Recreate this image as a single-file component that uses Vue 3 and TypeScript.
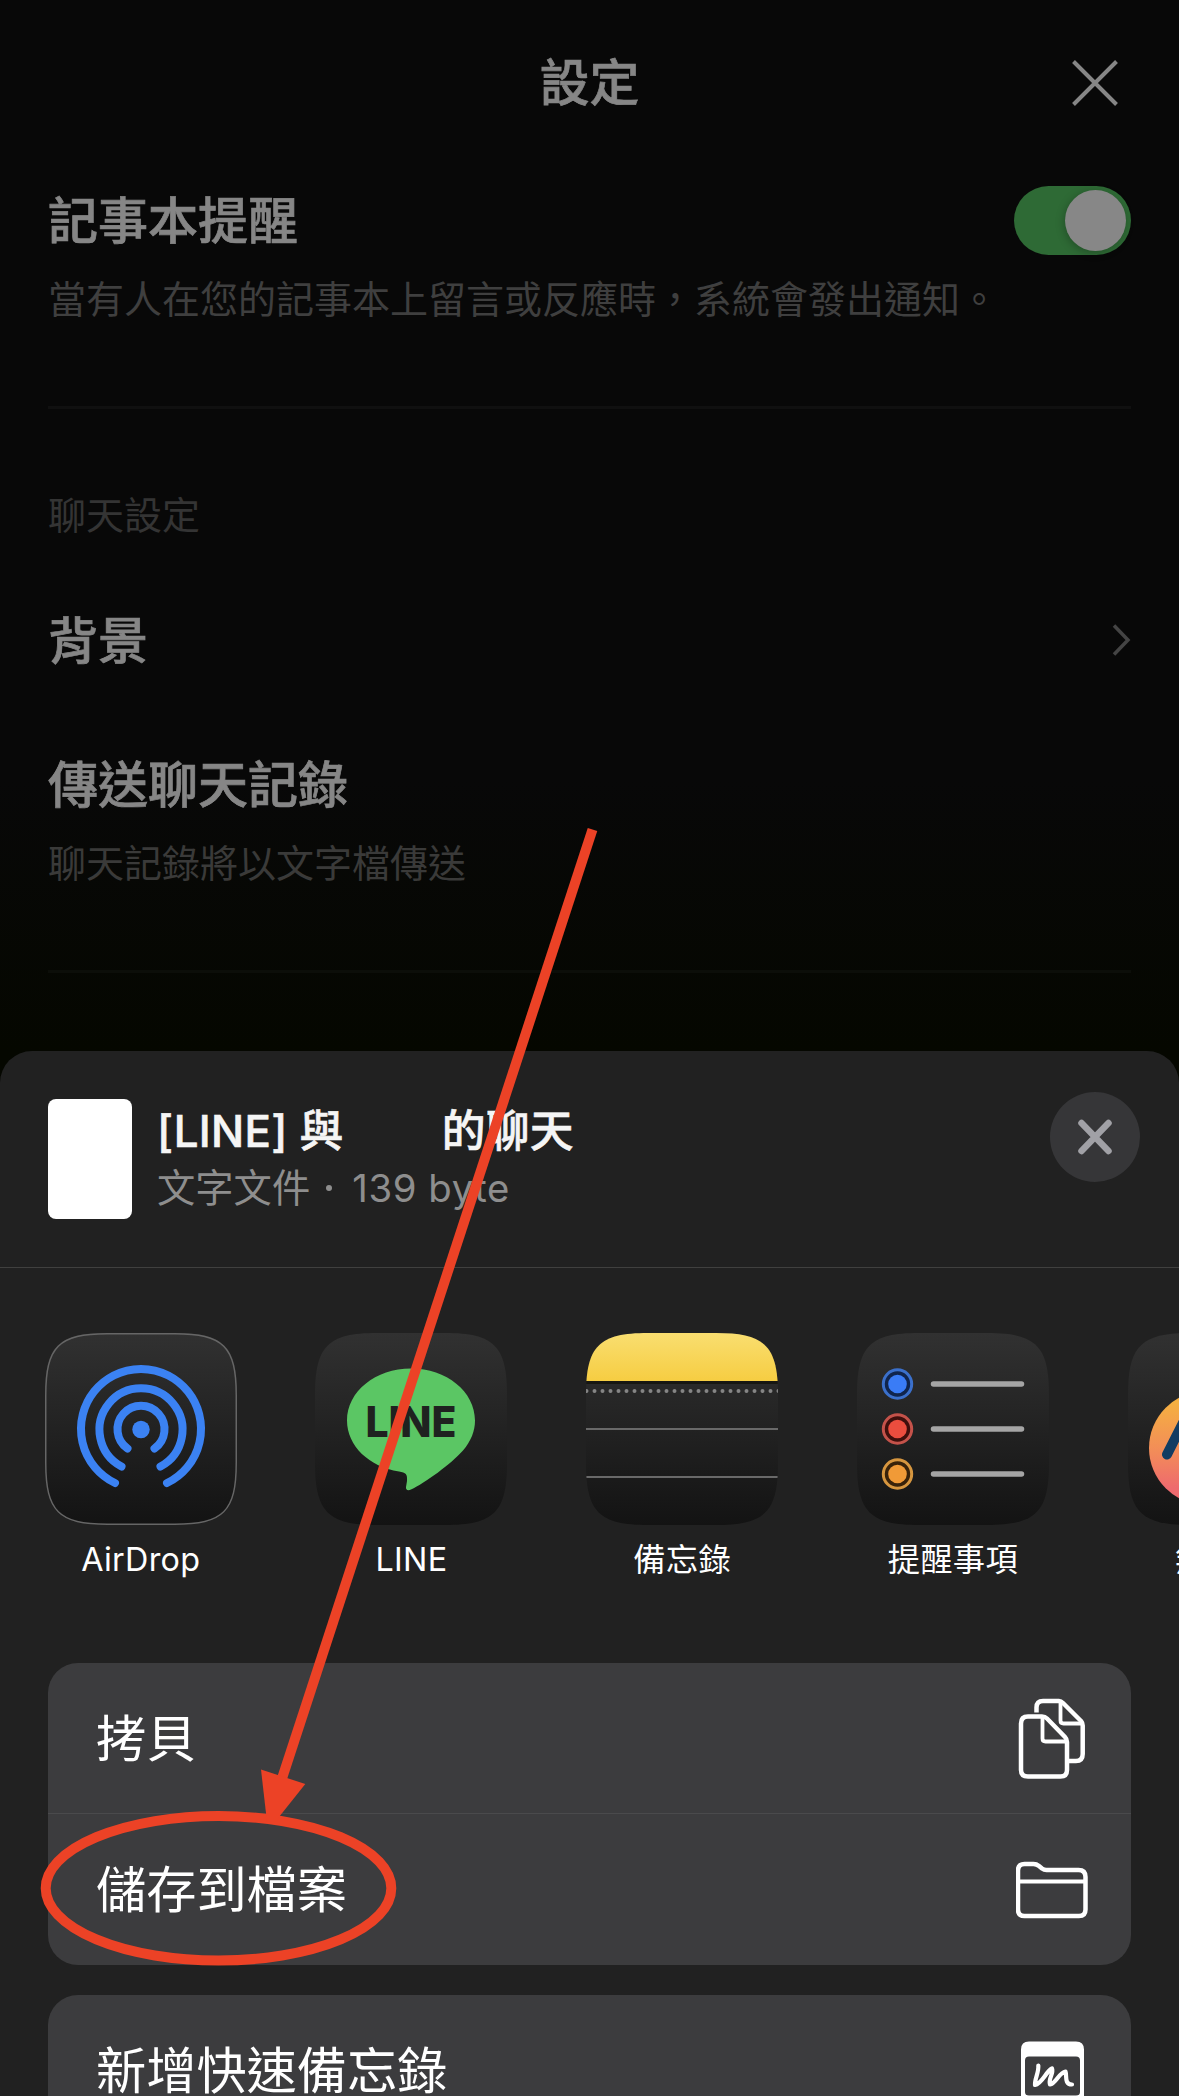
<script setup lang="ts">
interface ShareApp {
  id: 'airdrop' | 'line' | 'notes' | 'reminders' | 'freeform'
  label: string
}

interface Reminder {
  y: number
  fill: string
  ring: string
  gap: string
}

const apps: ShareApp[] = [
  { id: 'airdrop', label: 'AirDrop' },
  { id: 'line', label: 'LINE' },
  { id: 'notes', label: '備忘錄' },
  { id: 'reminders', label: '提醒事項' },
  { id: 'freeform', label: '無邊記' },
]

const reminders: Reminder[] = [
  { y: 51, fill: '#3a7cf6', ring: '#3b70cb', gap: '#10254d' },
  { y: 96, fill: '#eb4d3e', ring: '#c4524a', gap: '#3f0f0c' },
  { y: 141, fill: '#f09a37', ring: '#d6963f', gap: '#38220a' },
]

const squircle =
  'M0 62C0 13 13 0 62 0H130C179 0 192 13 192 62V130C192 179 179 192 130 192H62C13 192 0 179 0 130Z'
</script>

<template>
  <main class="screen">
    <header class="nav">
      <h1 class="nav-title">設定</h1>
      <svg class="nav-close" width="50" height="50" viewBox="0 0 50 50">
        <path d="M3.5 3.5L46.5 46.5M46.5 3.5L3.5 46.5" />
      </svg>
    </header>

    <section class="settings">
      <div class="row toggle-row">
        <span class="item">記事本提醒</span>
        <span class="toggle"><span class="knob"></span></span>
      </div>
      <p class="desc">當有人在您的記事本上留言或反應時，系統會發出通知。</p>
      <div class="divider first"></div>
      <p class="desc section">聊天設定</p>
      <div class="row background-row">
        <span class="item">背景</span>
        <svg width="20" height="34" viewBox="0 0 20 34" class="chevron">
          <path d="M3 2.5L17 17L3 31.5" />
        </svg>
      </div>
      <div class="row send-row"><span class="item">傳送聊天記錄</span></div>
      <p class="desc send-desc">聊天記錄將以文字檔傳送</p>
      <div class="divider second"></div>
    </section>

    <section class="sheet">
      <div class="sheet-head">
        <div class="thumb"></div>
        <div class="meta">
          <div class="meta-title"><span>[LINE] 與</span><span class="rest">的聊天</span></div>
          <div class="meta-sub"><span>文字文件</span><span class="dot"></span><span class="size">139 byte</span></div>
        </div>
        <div class="close">
          <svg width="36" height="38" viewBox="0 0 36 38">
            <path d="M4.5 5L31.5 33M31.5 5L4.5 33" />
          </svg>
        </div>
      </div>

      <div class="apps">
        <div v-for="app in apps" :key="app.id" class="app">
          <svg class="app-icon" width="192" height="192" viewBox="0 0 192 192">
            <defs>
              <linearGradient id="tile" x1="0" y1="0" x2="0" y2="1">
                <stop offset="0" stop-color="#313131" />
                <stop offset="1" stop-color="#131313" />
              </linearGradient>
              <linearGradient id="yellow" x1="0" y1="0" x2="0" y2="1">
                <stop offset="0" stop-color="#f9de70" />
                <stop offset="1" stop-color="#f6cd42" />
              </linearGradient>
              <linearGradient id="sunset" x1="0" y1="0" x2="0" y2="1">
                <stop offset="0.1" stop-color="#f5b041" />
                <stop offset="0.55" stop-color="#f28a5a" />
                <stop offset="0.85" stop-color="#ee6a6e" />
              </linearGradient>
              <clipPath id="mask"><path :d="squircle" /></clipPath>
            </defs>
            <path :d="squircle" fill="url(#tile)" />

            <g v-if="app.id === 'airdrop'">
              <path :d="squircle" class="outline" transform="translate(.75 .75) scale(.9922)" />
              <g class="waves">
                <path d="M70 150A60 60 0 1 1 122 150" />
                <path d="M76.500 133.500A41.500 41.500 0 1 1 115.500 133.500" />
                <path d="M82.500 115.500A23.500 23.500 0 1 1 109.500 115.500" />
              </g>
              <circle cx="96" cy="96.500" r="8.700" fill="#3b82f3" />
            </g>

            <g v-else-if="app.id === 'line'">
              <path
                d="M96 35.500C60.500 35.500 32 58.500 32 87.500C32 113 54.500 134 84 138.500C91 139.700 92.500 141 92 148L91 154C90.500 157 93 158 96 156.500C110 150 136 131 148 117.500C156 108 160 98 160 87.500C160 58.500 131.500 35.500 96 35.500Z"
                fill="#5bc664"
              />
              <text x="50.500" y="103.800" textLength="91" lengthAdjust="spacingAndGlyphs" class="line-logo">LINE</text>
            </g>

            <g v-else-if="app.id === 'notes'" clip-path="url(#mask)">
              <rect width="192" height="48" fill="url(#yellow)" />
              <rect y="48" width="192" height="3" fill="#171712" />
              <path d="M.5 58H194" class="perforation" />
              <path d="M0 96H192M0 144H192" class="rule" />
            </g>

            <g v-else-if="app.id === 'reminders'">
              <g v-for="r in reminders" :key="r.y">
                <circle cx="40.500" :cy="r.y" r="14.200" :fill="r.gap" :stroke="r.ring" stroke-width="3" />
                <circle cx="40.500" :cy="r.y" r="9.300" :fill="r.fill" />
                <path :d="`M76.500 ${r.y}H164.500`" class="bar" />
              </g>
            </g>

            <g v-else>
              <circle cx="78" cy="115" r="57" fill="url(#sunset)" />
              <path d="M39 121.500L60 80" class="stroke-art" />
            </g>
          </svg>
          <span class="app-label">{{ app.label }}</span>
        </div>
      </div>

      <div class="card">
        <div class="action">
          <span>拷貝</span>
          <svg width="72" height="86" viewBox="0 0 72 86" class="glyph">
            <path d="M20.500 16.500V11.500Q20.500 5 27 5H43Q45 5 47 7L65 25Q66.700 27 66.700 29.500V58Q66.700 65 60 65H52.500" />
            <path d="M44.500 6V24.500Q44.500 27.500 47.500 27.500H65" class="thin" />
            <path d="M5 27.500Q5 20.500 12 20.500H26Q29 20.500 31 22.500L49 41Q51 43 51 46V74Q51 80.500 44.500 80.500H12Q5 80.500 5 74Z" />
            <path d="M26.500 22V42.500Q26.500 45.500 29.500 45.500H50" class="thin" />
          </svg>
        </div>
        <div class="action">
          <span>儲存到檔案</span>
          <svg width="72" height="86" viewBox="0 0 72 86" class="glyph">
            <path d="M2 23.500Q2 17 8.500 17H17.500Q20.500 17 23 19L26 21.500Q28 23 30.500 23H62.500Q69.500 23 69.500 30V62.500Q69.500 69 63 69H8.500Q2 69 2 62.500Z" />
            <path d="M3 34.500H69" class="thin" />
          </svg>
        </div>
      </div>

      <div class="card">
        <div class="action">
          <span>新增快速備忘錄</span>
          <svg width="72" height="86" viewBox="0 0 72 86" class="glyph note">
            <path
              fill-rule="evenodd"
              d="M13 13.500H60Q68 13.500 68 21.500V70Q68 78 60 78H13Q5 78 5 70V21.500Q5 13.500 13 13.500ZM13 28.500Q9 28.500 9 32.500V64Q9 67.500 13 67.500H60Q64 67.500 64 64V32.500Q64 28.500 60 28.500Z"
            />
            <path
              class="scribble"
              d="M22.300 37.500C23 44.500 18.500 51 19 57C26 55.500 30 43.500 36 40.500C38 45.500 32 50.500 34 56.500C40 55.500 43 44.500 49.500 43.500C51 47.500 48 56.500 56 56.500"
            />
          </svg>
        </div>
      </div>
    </section>

    <svg class="annotation" width="1179" height="2096" viewBox="0 0 1179 2096">
      <path d="M592.500 829.500L281.500 1780" />
      <ellipse cx="218.500" cy="1888.300" rx="172.800" ry="72.300" />
      <polygon points="261,1769.500 305.300,1784 275,1822 267,1822" />
    </svg>
  </main>
</template>

<style>
body {
  margin: 0;
  background: #080808;
}
</style>

<style scoped>
.screen {
  position: relative;
  display: flex;
  flex-direction: column;
  width: 1179px;
  height: 2096px;
  overflow: hidden;
  background: linear-gradient(#080808 0, #080808 780px, #050700 1050px);
  font-family: Inter, 'Noto Sans CJK TC', sans-serif;
  color: #fff;
}

.nav {
  display: grid;
  grid-template-columns: 1fr auto 1fr;
  align-items: center;
  flex: none;
  height: 166px;
  padding: 0 59px;
}

.nav-title {
  grid-column: 2;
  margin: 0;
  font-size: 49.800px;
  line-height: 60px;
  font-weight: 500;
  color: #868686;
  -webkit-text-stroke: 0.7px currentColor;
}

.nav-close {
  justify-self: end;
  fill: none;
  stroke: #868686;
  stroke-width: 4;
}

.settings {
  flex: none;
  padding: 0 48px;
}

.row {
  display: flex;
  align-items: center;
  justify-content: space-between;
}

.item {
  font-size: 50px;
  line-height: 60px;
  font-weight: 500;
  color: #868686;
  -webkit-text-stroke: 0.7px currentColor;
}

.toggle-row {
  height: 110px;
}

.toggle {
  display: flex;
  justify-content: flex-end;
  box-sizing: border-box;
  width: 117px;
  height: 69px;
  margin-bottom: 2px;
  padding: 4px 5px;
  border-radius: 35px;
  background: #2e6a35;
}

.knob {
  width: 61px;
  height: 61px;
  border-radius: 50%;
  background: #878787;
  box-shadow: -1px 2px 8px rgba(0, 0, 0, 0.25);
}

.desc {
  margin: 0;
  font-size: 38px;
  line-height: 46px;
  color: #3f3f3f;
  white-space: nowrap;
}

.divider {
  height: 3px;
  background: #101010;
}

.first {
  margin-top: 84px;
}

.section {
  margin-top: 83px;
  color: #343434;
}

.background-row {
  height: 100px;
  margin-top: 53px;
}

.chevron {
  margin-bottom: 2px;
  fill: none;
  stroke: #444;
  stroke-width: 3.500;
}

.send-row {
  height: 60px;
  margin-top: 64px;
}

.send-desc {
  margin-top: 25px;
  color: #3a3a39;
}

.second {
  margin-top: 84px;
  background: #0c0e09;
}

.sheet {
  flex: none;
  width: 1179px;
  height: 1100px;
  margin-top: 78px;
  border-radius: 32px 32px 0 0;
  background: #212121;
}

.sheet-head {
  display: flex;
  align-items: flex-start;
  box-sizing: border-box;
  height: 217px;
  padding: 41px 39px 0 48px;
  border-bottom: 1px solid #40403f;
}

.thumb {
  width: 84px;
  height: 120px;
  margin-top: 7px;
  border-radius: 8px;
  background: #fff;
}

.meta {
  flex: 1;
  margin: 15px 0 0 25px;
}

.meta-title {
  display: flex;
  height: 50px;
  line-height: 50px;
  font-size: 43.800px;
  font-weight: 500;
  letter-spacing: 0.3px;
  color: #f5f5f5;
  -webkit-text-stroke: 0.6px currentColor;
}

.rest {
  margin-left: 98px;
}

.meta-sub {
  display: flex;
  align-items: center;
  height: 50px;
  margin-top: 6px;
  line-height: 50px;
  font-size: 38.300px;
  color: #8e8e8e;
}

.dot {
  width: 6px;
  height: 6px;
  margin: 0 20px 0 16px;
  border-radius: 50%;
  background: #8e8e8e;
}

.size {
  letter-spacing: 0.6px;
}

.close {
  display: flex;
  align-items: center;
  justify-content: center;
  width: 90px;
  height: 90px;
  border-radius: 50%;
  background: #363638;
}

.close svg {
  fill: none;
  stroke: #a1a1a6;
  stroke-width: 6.500;
  stroke-linecap: round;
}

.apps {
  display: flex;
  gap: 78.700px;
  height: 247px;
  padding: 65px 0 83px 44.800px;
  overflow: hidden;
}

.app {
  display: flex;
  flex: none;
  flex-direction: column;
  align-items: center;
  width: 192px;
}

.app-icon {
  display: block;
}

.app-label {
  margin-top: 15px;
  font-size: 32.300px;
  line-height: 40px;
  letter-spacing: 0.3px;
  white-space: nowrap;
}

.outline {
  fill: none;
  stroke: #666;
  stroke-width: 1.500;
}

.waves {
  fill: none;
  stroke: #3b82f3;
  stroke-width: 8;
  stroke-linecap: round;
}

.line-logo {
  font: 800 43px Inter, sans-serif;
  fill: #1f2220;
}

.perforation {
  fill: none;
  stroke: #858585;
  stroke-width: 4;
  stroke-linecap: round;
  stroke-dasharray: 0 8;
}

.rule {
  fill: none;
  stroke: #696969;
  stroke-width: 2.200;
}

.bar {
  fill: none;
  stroke: #a5a5a5;
  stroke-width: 5.500;
  stroke-linecap: round;
}

.stroke-art {
  fill: none;
  stroke: #123c62;
  stroke-width: 10;
  stroke-linecap: round;
}

.card {
  width: 1083px;
  margin: 0 48px 30px;
  border-radius: 30px;
  background: #3c3c3e;
}

.action {
  display: flex;
  align-items: center;
  justify-content: space-between;
  box-sizing: border-box;
  height: 150px;
  padding: 2px 43px 0 48px;
  font-size: 50.200px;
  line-height: 60px;
}

.action + .action {
  height: 152px;
  padding-top: 1px;
  border-top: 1px solid #4a4a4c;
}

.glyph {
  fill: none;
  stroke: #fff;
  stroke-width: 4.500;
  stroke-linejoin: round;
}

.thin {
  stroke-width: 3.800;
}

.note path:first-child {
  fill: #fff;
  stroke: none;
}

.scribble {
  stroke-width: 4.200;
  stroke-linecap: round;
}

.annotation {
  position: absolute;
  top: 0;
  left: 0;
  fill: none;
  stroke: #ec4226;
  stroke-width: 10;
}

.annotation polygon {
  fill: #ec4226;
  stroke: none;
}
</style>
